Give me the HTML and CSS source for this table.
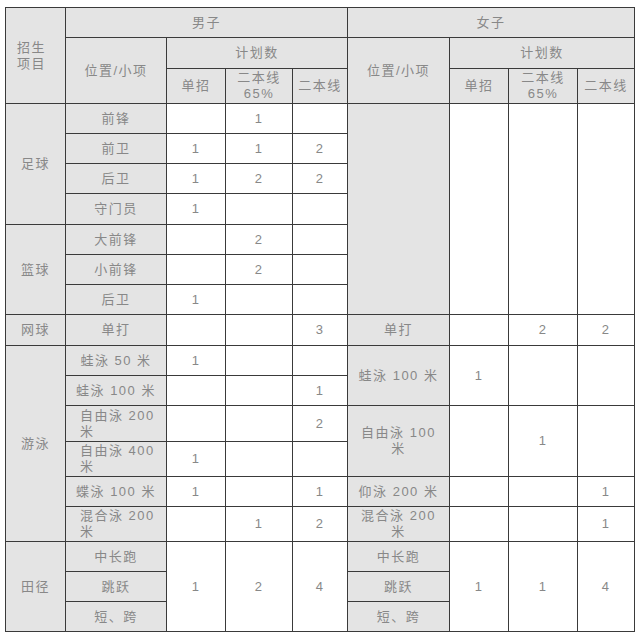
FILE: index.html
```html
<!DOCTYPE html>
<html lang="zh">
<head>
<meta charset="utf-8">
<title>招生计划</title>
<link rel="stylesheet" href="styles.css">
</head>
<body>
<table class="plan">
  <colgroup>
    <col class="c60"><col class="c101"><col class="c59"><col class="c67"><col class="c55">
    <col class="c102"><col class="c59"><col class="c69"><col class="c57">
  </colgroup>
  <tr class="h30">
    <th rowspan="3" class="proj">招生<br>项目</th>
    <th colspan="4">男子</th>
    <th colspan="4">女子</th>
  </tr>
  <tr class="h31">
    <th rowspan="2">位置/小项</th>
    <th colspan="3">计划数</th>
    <th rowspan="2">位置/小项</th>
    <th colspan="3">计划数</th>
  </tr>
  <tr class="h35">
    <th>单招</th>
    <th class="two">二本线<br>65%</th>
    <th>二本线</th>
    <th>单招</th>
    <th class="two">二本线<br>65%</th>
    <th>二本线</th>
  </tr>

  <tr class="h30">
    <td rowspan="4" class="g">足球</td>
    <td class="g">前锋</td><td></td><td>1</td><td></td>
    <td rowspan="7" class="g"></td><td rowspan="7"></td><td rowspan="7"></td><td rowspan="7"></td>
  </tr>
  <tr class="h30"><td class="g">前卫</td><td>1</td><td>1</td><td>2</td></tr>
  <tr class="h30"><td class="g">后卫</td><td>1</td><td>2</td><td>2</td></tr>
  <tr class="h31"><td class="g">守门员</td><td>1</td><td></td><td></td></tr>
  <tr class="h30">
    <td rowspan="3" class="g">篮球</td>
    <td class="g">大前锋</td><td></td><td>2</td><td></td>
  </tr>
  <tr class="h30"><td class="g">小前锋</td><td></td><td>2</td><td></td></tr>
  <tr class="h30"><td class="g">后卫</td><td>1</td><td></td><td></td></tr>

  <tr class="h31">
    <td class="g">网球</td>
    <td class="g">单打</td><td></td><td></td><td>3</td>
    <td class="g">单打</td><td></td><td>2</td><td>2</td>
  </tr>

  <tr class="h30">
    <td rowspan="6" class="g">游泳</td>
    <td class="g">蛙泳 50 米</td><td>1</td><td></td><td></td>
    <td rowspan="2" class="g">蛙泳 100 米</td><td rowspan="2">1</td><td rowspan="2"></td><td rowspan="2"></td>
  </tr>
  <tr class="h30"><td class="g">蛙泳 100 米</td><td></td><td></td><td>1</td></tr>
  <tr class="h36">
    <td class="g wrap">自由泳 200<br>米</td><td></td><td></td><td>2</td>
    <td rowspan="2" class="g two">自由泳 100<br>米</td><td rowspan="2"></td><td rowspan="2">1</td><td rowspan="2"></td>
  </tr>
  <tr class="h35"><td class="g wrap">自由泳 400<br>米</td><td>1</td><td></td><td></td></tr>
  <tr class="h30">
    <td class="g">蝶泳 100 米</td><td>1</td><td></td><td>1</td>
    <td class="g">仰泳 200 米</td><td></td><td></td><td>1</td>
  </tr>
  <tr class="h35">
    <td class="g wrap">混合泳 200<br>米</td><td></td><td>1</td><td>2</td>
    <td class="g two">混合泳 200<br>米</td><td></td><td></td><td>1</td>
  </tr>

  <tr class="h30">
    <td rowspan="3" class="g">田径</td>
    <td class="g">中长跑</td><td rowspan="3">1</td><td rowspan="3">2</td><td rowspan="3">4</td>
    <td class="g">中长跑</td><td rowspan="3">1</td><td rowspan="3">1</td><td rowspan="3">4</td>
  </tr>
  <tr class="h30"><td class="g">跳跃</td><td class="g">跳跃</td></tr>
  <tr class="h30"><td class="g">短、跨</td><td class="g">短、跨</td></tr>
</table>
</body>
</html>
```

FILE: styles.css
```css
html, body {
  margin: 0;
  padding: 0;
  background: #ffffff;
}

.plan {
  margin: 7px 0 0 5px;
  border-collapse: collapse;
  table-layout: fixed;
  width: 629px;
  font-family: "Liberation Sans", "Noto Sans CJK SC", sans-serif;
  font-size: 13px;
  color: #888888;
}

.c60 { width: 60px; }
.c101 { width: 101px; }
.c59 { width: 59px; }
.c67 { width: 67px; }
.c55 { width: 55px; }
.c102 { width: 102px; }
.c69 { width: 69px; }
.c57 { width: 57px; }

.h30 { height: 30px; }
.h31 { height: 31px; }
.h35 { height: 35px; }
.h36 { height: 36px; }

.plan th,
.plan td {
  border: 1px solid #3a3a3a;
  padding: 0;
  text-align: center;
  vertical-align: middle;
  font-weight: normal;
  line-height: 16px;
  letter-spacing: 1.5px;
  overflow: hidden;
}

.plan th,
.plan td.g {
  background: #e4e4e4;
}

.plan th.proj {
  padding-right: 8px;
  line-height: 16px;
}

.plan .two {
  line-height: 16px;
}

.plan td.wrap {
  text-align: left;
  padding: 0 0 0 14px;
  line-height: 16px;
}
```
